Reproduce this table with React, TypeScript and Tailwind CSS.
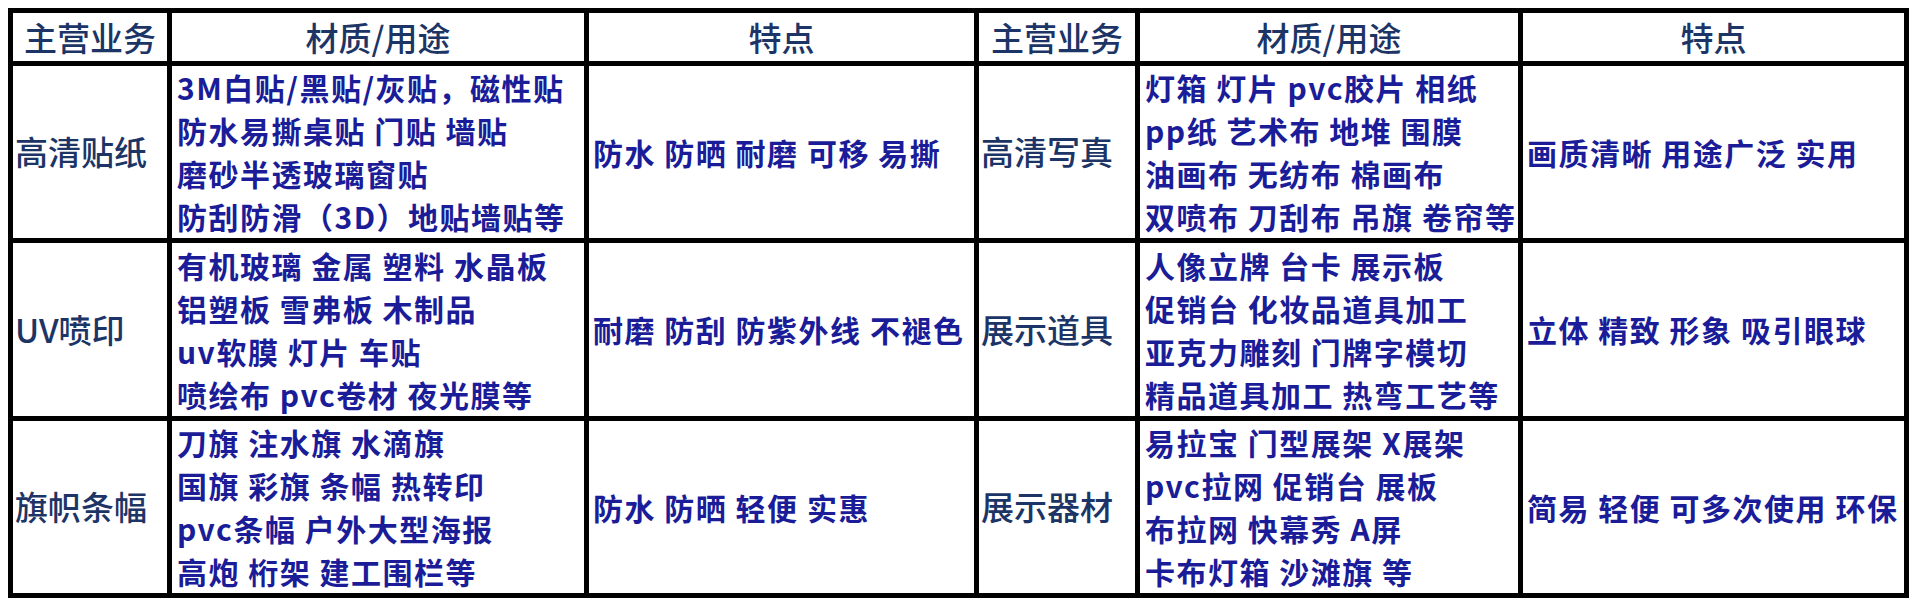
const rows = [
  {
    label: "高清贴纸",
    materials: ["3M白贴/黑贴/灰贴，磁性贴", "防水易撕桌贴 门贴 墙贴", "磨砂半透玻璃窗贴", "防刮防滑（3D）地贴墙贴等"],
    features: "防水 防晒 耐磨 可移 易撕",
    label2: "高清写真",
    materials2: ["灯箱 灯片 pvc胶片 相纸", "pp纸 艺术布 地堆 围膜", "油画布 无纺布 棉画布", "双喷布 刀刮布 吊旗 卷帘等"],
    features2: "画质清晰 用途广泛 实用",
  },
  {
    label: "UV喷印",
    materials: ["有机玻璃 金属 塑料 水晶板", "铝塑板 雪弗板 木制品", "uv软膜 灯片 车贴", "喷绘布 pvc卷材 夜光膜等"],
    features: "耐磨 防刮 防紫外线 不褪色",
    label2: "展示道具",
    materials2: ["人像立牌 台卡 展示板", "促销台 化妆品道具加工", "亚克力雕刻 门牌字模切", "精品道具加工 热弯工艺等"],
    features2: "立体 精致 形象 吸引眼球",
  },
  {
    label: "旗帜条幅",
    materials: ["刀旗 注水旗 水滴旗", "国旗 彩旗 条幅 热转印", "pvc条幅 户外大型海报", "高炮 桁架 建工围栏等"],
    features: "防水 防晒 轻便 实惠",
    label2: "展示器材",
    materials2: ["易拉宝 门型展架 X展架", "pvc拉网 促销台 展板", "布拉网 快幕秀 A屏", "卡布灯箱 沙滩旗 等"],
    features2: "简易 轻便 可多次使用 环保",
  },
];

function Head({ children }: { children: React.ReactNode }) {
  return (
    <div className="bg-white flex items-center justify-center font-medium text-[33px] leading-[48px] text-[#1c3566]">
      {children}
    </div>
  );
}

function Label({ children }: { children: React.ReactNode }) {
  return (
    <div className="bg-white flex items-center pl-[2px] font-medium text-[33px] text-[#1c3566] whitespace-nowrap">
      {children}
    </div>
  );
}

function Lines({ lines }: { lines: string[] }) {
  return (
    <div className="bg-white flex flex-col justify-center pl-[5px] font-bold text-[30px] leading-[43px] tracking-[1.5px] text-[#1a1c98] whitespace-nowrap">
      {lines.map((l) => (
        <div key={l}>{l}</div>
      ))}
    </div>
  );
}

function Feature({ children }: { children: React.ReactNode }) {
  return (
    <div className="bg-white flex items-center pl-[4px] font-bold text-[30px] tracking-[1.5px] text-[#1a1c98] whitespace-nowrap">
      {children}
    </div>
  );
}

export default function App() {
  return (
    <div className="min-h-screen bg-white pt-[8px] pl-[8px] font-['Noto_Sans_CJK_SC',sans-serif]">
      <div className="w-fit grid grid-cols-[154px_412px_385px_156px_378px_381px] grid-rows-[48px_172px_173px_172px] gap-[5px] p-[5px] bg-black">
        <Head>主营业务</Head>
        <Head>材质/用途</Head>
        <Head>特点</Head>
        <Head>主营业务</Head>
        <Head>材质/用途</Head>
        <Head>特点</Head>
        {rows.map((r) => (
          <>
            <Label key={r.label}>{r.label}</Label>
            <Lines lines={r.materials} />
            <Feature>{r.features}</Feature>
            <Label>{r.label2}</Label>
            <Lines lines={r.materials2} />
            <Feature>{r.features2}</Feature>
          </>
        ))}
      </div>
    </div>
  );
}
